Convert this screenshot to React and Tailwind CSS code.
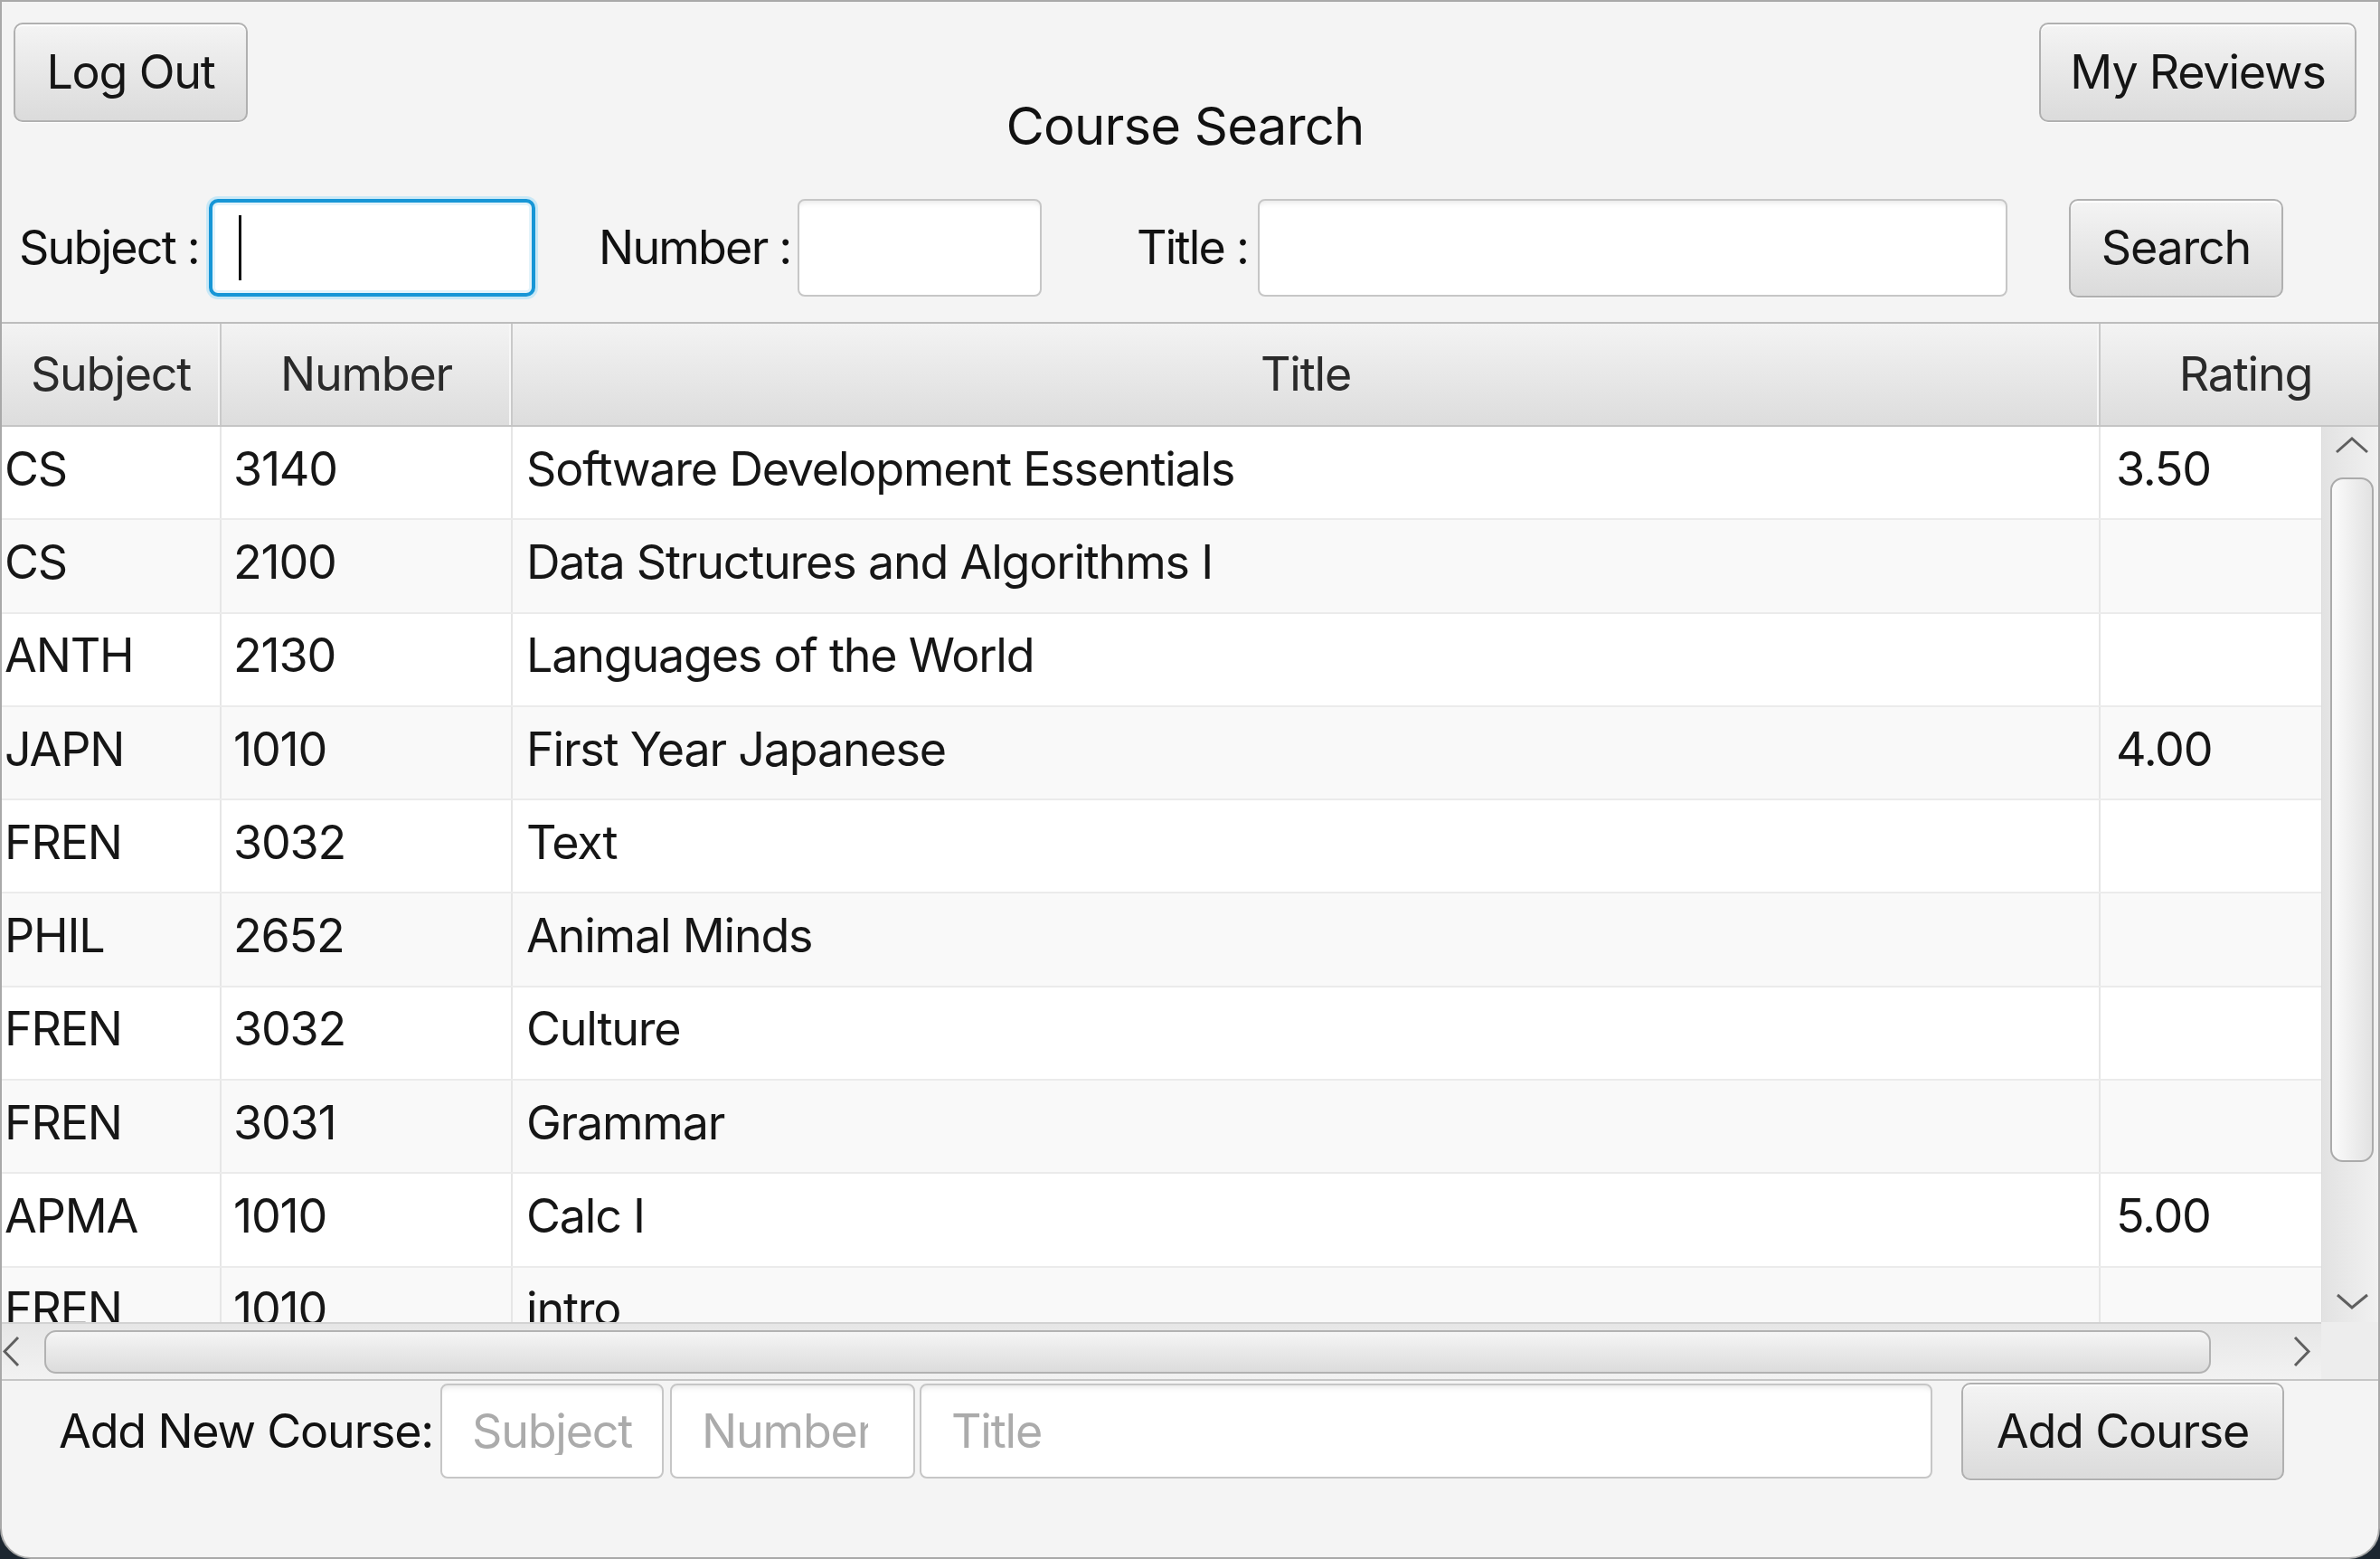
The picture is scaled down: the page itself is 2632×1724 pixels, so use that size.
import React from "react";

const rows = [
  ["CS", "3140", "Software Development Essentials", "3.50"],
  ["CS", "2100", "Data Structures and Algorithms I", ""],
  ["ANTH", "2130", "Languages of the World", ""],
  ["JAPN", "1010", "First Year Japanese", "4.00"],
  ["FREN", "3032", "Text", ""],
  ["PHIL", "2652", "Animal Minds", ""],
  ["FREN", "3032", "Culture", ""],
  ["FREN", "3031", "Grammar", ""],
  ["APMA", "1010", "Calc I", "5.00"],
  ["FREN", "1010", "intro", ""],
];

function Btn({ children, className }) {
  return (
    <div
      className={
        "flex items-center justify-center rounded-[10px] border-2 border-[#b0b0b0] bg-gradient-to-b from-[#f4f4f4] to-[#dbdbdb] shadow-[inset_0_2px_0_#ffffff,0_1px_0_#ffffff] text-[52px] leading-none text-[#151515] " +
        className
      }
    >
      {children}
    </div>
  );
}

function Field({ className, placeholder, focused }) {
  if (focused) {
    return (
      <div
        className={
          "relative flex items-center rounded-[10px] border-[4px] border-[#1796d6] bg-white shadow-[0_0_0_3px_#c9e8f6,inset_0_0_0_3px_#e3f3fa] " +
          className
        }
      >
        <div className="ml-[29px] h-[72px] w-[3px] bg-[#111]" />
      </div>
    );
  }
  return (
    <div
      className={
        "flex items-center rounded-[8px] border-2 border-[#c6c6c6] bg-white shadow-[inset_0_7px_6px_-5px_rgba(0,0,0,0.10)] pl-[33px] " +
        className
      }
    >
      {placeholder ? (
        <div className="w-full overflow-hidden whitespace-nowrap text-[52px] leading-none text-[#ababab]">
          {placeholder}
        </div>
      ) : null}
    </div>
  );
}

function Chevron({ dir, className }) {
  const pts = {
    up: "2,17 19,2 36,17",
    down: "2,2 18,16 35,2",
    left: "17,2 2,17.5 17,33",
    right: "2,2 17,17.5 2,33",
  }[dir];
  const vb = { up: "0 0 38 19", down: "0 0 37 18", left: "0 0 19 35", right: "0 0 19 35" }[dir];
  return (
    <svg viewBox={vb} className={className} fill="none">
      <polyline points={pts} stroke="#5f5f5f" strokeWidth="3" strokeLinejoin="miter" />
    </svg>
  );
}

export default function App() {
  return (
    <div className="h-[1724px] w-[2632px] bg-[#1c2630] font-['Inter','Noto_Sans',sans-serif] tracking-[-1.2px]">
      <div className="flex h-[1724px] w-[2632px] flex-col overflow-hidden rounded-b-[34px] border-2 border-[#a9a9a9] bg-[#f4f4f4]">
        {/* Top section */}
        <div className="flex flex-col border-b-2 border-[#bdbdbd] pb-[26px] pt-[23px]">
          <div className="grid grid-cols-[1fr_auto_1fr] items-start pl-[13px] pr-[24px]">
            <Btn className="h-[110px] w-[259px]">Log Out</Btn>
            <div className="mt-[85px] text-[58px] leading-none tracking-[-0.8px] text-[#111]">Course Search</div>
            <Btn className="h-[110px] w-[351px] justify-self-end">My Reviews</Btn>
          </div>
          <div className="mt-[50px] flex h-[112px] items-center pl-[19px] text-[52px] leading-none text-[#111]">
            <div className="w-[188px] whitespace-nowrap tracking-[-1.8px]">Subject :</div>
            <Field focused className="ml-[22px] h-[108px] w-[361px]" />
            <div className="ml-[70px] w-[198px] whitespace-nowrap tracking-[-1.8px]">Number :</div>
            <Field className="ml-[22px] h-[108px] w-[270px]" />
            <div className="ml-[105px] w-[111px] whitespace-nowrap tracking-[-1.8px]">Title :</div>
            <Field className="ml-[23px] h-[108px] w-[829px]" />
            <Btn className="ml-[68px] h-[109px] w-[237px]">Search</Btn>
          </div>
        </div>

        {/* Table */}
        <div className="flex flex-col">
          <div className="flex h-[114px] border-b-2 border-[#c4c4c4] bg-gradient-to-b from-[#f3f3f3] to-[#dddddd] text-[52px] leading-none text-[#2a2a2a]">
            <div className="flex w-[243px] items-center justify-center border-r-2 border-[#c9c9c9] shadow-[inset_-2px_0_0_#f7f7f7]">Subject</div>
            <div className="flex w-[322px] items-center justify-center border-r-2 border-[#c9c9c9] shadow-[inset_-2px_0_0_#f7f7f7]">Number</div>
            <div className="flex w-[1756px] items-center justify-center border-r-2 border-[#c9c9c9] shadow-[inset_-2px_0_0_#f7f7f7]">Title</div>
            <div className="flex flex-1 items-center justify-center pl-[14px]">Rating</div>
          </div>

          <div className="flex h-[990px]">
            <div className="flex flex-1 flex-col overflow-hidden">
              {rows.map((r, i) => (
                <div
                  key={i}
                  className={
                    "flex h-[103.3px] shrink-0 border-b-2 border-[#ebebeb] text-[52px] leading-none text-[#161616] " +
                    (i % 2 === 0 ? "bg-white" : "bg-[#f9f9f9]")
                  }
                >
                  <div className="flex w-[243px] items-center border-r-2 border-[#e6e6e6] pb-[8px] pl-[3px]">{r[0]}</div>
                  <div className="flex w-[322px] items-center border-r-2 border-[#e6e6e6] pb-[8px] pl-[13px]">{r[1]}</div>
                  <div className="flex w-[1756px] items-center border-r-2 border-[#e6e6e6] pb-[8px] pl-[15px]">{r[2]}</div>
                  <div className="flex flex-1 items-center pb-[8px] pl-[17px]">{r[3]}</div>
                </div>
              ))}
            </div>
            <div className="flex w-[63px] flex-col items-start border-l border-[#dcdcdc] bg-gradient-to-r from-[#e2e2e2] to-[#f1f1f1]">
              <Chevron dir="up" className="ml-[14px] mt-[11px] h-[19px] w-[38px]" />
              <div className="ml-[9px] mt-[26px] h-[757px] w-[48px] rounded-[14px] border-2 border-[#ababab] bg-gradient-to-r from-[#fbfbfb] to-[#e2e2e2]" />
              <Chevron dir="down" className="ml-[15px] mt-[145px] h-[18px] w-[37px]" />
            </div>
          </div>

          <div className="flex h-[65px]">
            <div className="flex flex-1 items-center border-y-2 border-t-[#d2d2d2] border-b-[#c6c6c6] bg-gradient-to-b from-[#e6e6e6] to-[#f2f2f2]">
              <Chevron dir="left" className="ml-[1px] h-[35px] w-[19px]" />
              <div className="ml-[27px] h-[48px] w-[2396px] rounded-[13px] border-2 border-[#b2b2b2] bg-gradient-to-b from-[#f5f5f5] to-[#dcdcdc]" />
              <Chevron dir="right" className="ml-[90px] h-[35px] w-[21px]" />
            </div>
            <div className="w-[63px] border-b-2 border-[#c6c6c6] bg-[#ededed]" />
          </div>
        </div>

        {/* Bottom */}
        <div className="flex items-start pl-[63px] pt-[2px]">
          <div className="flex h-[108px] w-[410px] items-center whitespace-nowrap text-[52px] leading-none text-[#111]">
            Add New Course:
          </div>
          <Field placeholder="Subject" className="ml-[12px] mt-[1px] h-[105px] w-[247px] pr-[20px]" />
          <Field placeholder="Number" className="ml-[7px] mt-[1px] h-[105px] w-[271px] pr-[50px]" />
          <Field placeholder="Title" className="ml-[5px] mt-[1px] h-[105px] w-[1120px] pr-[30px]" />
          <Btn className="ml-[32px] h-[108px] w-[357px]">Add Course</Btn>
        </div>
      </div>
    </div>
  );
}
